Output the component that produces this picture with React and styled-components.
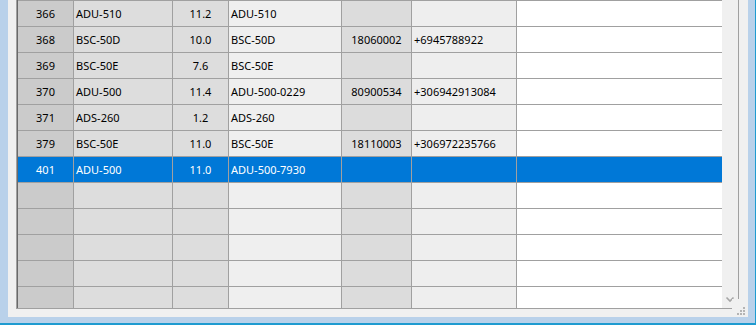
import React from "react";
import styled, { createGlobalStyle } from "styled-components";

const GlobalStyle = createGlobalStyle`
  html, body {
    margin: 0;
    padding: 0;
    overflow: hidden;
    background: #b9d1ea;
  }
  body {
    font-family: "Noto Sans", "Open Sans", sans-serif;
    font-size: 11px;
  }
`;

const Window = styled.div`
  box-sizing: border-box;
  width: 756px;
  height: 325px;
  display: flex;
  background: #b9d1ea;
  border-right: 1px solid #1e9bd0;
  border-bottom: 2px solid #1e9bd0;
  padding: 0 7px 6px 8px;
`;

const Client = styled.div`
  position: relative;
  flex: 1;
  display: flex;
  background: #f0f0f0;
  padding: 0 9px 8px 8px;
`;

const GridFrame = styled.div`
  flex: 1;
  display: flex;
  border-left: 1px solid #a0a0a0;
  border-right: 1px solid #a0a0a0;
  border-bottom: 1px solid #a0a0a0;
`;

const GridBody = styled.div`
  flex: 1;
  display: flex;
  border-left: 1px solid #696969;
  min-height: 0;
`;

const DataArea = styled.div`
  width: 704px;
  overflow: hidden;
  border-top: 1px solid #a0a0a0;
  display: flex;
  flex-direction: column;
`;

const Row = styled.div`
  flex: none;
  display: grid;
  grid-template-columns: 56px 99px 56px 113px 70px 105px 205px;
  height: 26px;
  box-sizing: border-box;
  border-bottom: 1px solid #a0a0a0;
`;

const COLS = [
  { bg: "#cbcbcb", align: "center" },
  { bg: "#dddddd", align: "left" },
  { bg: "#dddddd", align: "center" },
  { bg: "#efefef", align: "left" },
  { bg: "#dcdcdc", align: "center" },
  { bg: "#eeeeee", align: "left" },
  { bg: "#ffffff", align: "left", last: true },
];

const Cell = styled.div`
  box-sizing: border-box;
  height: 25px;
  line-height: 25px;
  padding: 0 2px;
  white-space: nowrap;
  overflow: hidden;
  text-align: ${(p) => p.$align};
  background: ${(p) => (p.$selected ? "#0078d7" : p.$bg)};
  color: ${(p) => (p.$selected ? "#ffffff" : "#000000")};
  border-right: ${(p) => (p.$last ? "none" : "1px solid #a0a0a0")};
`;

const ScrollBar = styled.div`
  width: 16px;
  background: #f0f0f0;
  display: flex;
  flex-direction: column;
  justify-content: flex-end;
`;

const ArrowButton = styled.div`
  height: 17px;
  display: flex;
`;

const SizeGrip = styled.div`
  position: absolute;
  right: 0;
  bottom: 0;
  width: 16px;
  height: 18px;
  background: #f0f0f0;
  display: flex;
`;

const rows = [
  ["366", "ADU-510", "11.2", "ADU-510", "", ""],
  ["368", "BSC-50D", "10.0", "BSC-50D", "18060002", "+6945788922"],
  ["369", "BSC-50E", "7.6", "BSC-50E", "", ""],
  ["370", "ADU-500", "11.4", "ADU-500-0229", "80900534", "+306942913084"],
  ["371", "ADS-260", "1.2", "ADS-260", "", ""],
  ["379", "BSC-50E", "11.0", "BSC-50E", "18110003", "+306972235766"],
  ["401", "ADU-500", "11.0", "ADU-500-7930", "", ""],
  ["", "", "", "", "", ""],
  ["", "", "", "", "", ""],
  ["", "", "", "", "", ""],
  ["", "", "", "", "", ""],
  ["", "", "", "", "", ""],
];

const SELECTED = 6;

export default function App() {
  return (
    <>
      <GlobalStyle />
      <Window>
        <Client>
          <GridFrame>
            <GridBody>
              <DataArea>
                {rows.map((r, i) => (
                  <Row key={i}>
                    {COLS.map((c, j) => (
                      <Cell
                        key={j}
                        $bg={c.bg}
                        $align={c.align}
                        $last={c.last}
                        $selected={i === SELECTED}
                      >
                        {r[j] || ""}
                      </Cell>
                    ))}
                  </Row>
                ))}
              </DataArea>
              <ScrollBar>
                <ArrowButton>
                  <svg width="16" height="17" viewBox="0 0 16 17">
                    <path
                      d="M4.5 6.5 L8 10 L11.5 6.5"
                      fill="none"
                      stroke="#a6a6a6"
                      strokeWidth="1.6"
                    />
                  </svg>
                </ArrowButton>
              </ScrollBar>
            </GridBody>
          </GridFrame>
          <SizeGrip>
            <svg width="16" height="18" viewBox="0 0 16 18">
              <g fill="#b4b4b4">
                <rect x="11" y="8" width="2" height="2" />
                <rect x="8" y="11" width="2" height="2" />
                <rect x="11" y="11" width="2" height="2" />
                <rect x="5" y="14" width="2" height="2" />
                <rect x="8" y="14" width="2" height="2" />
                <rect x="11" y="14" width="2" height="2" />
              </g>
            </svg>
          </SizeGrip>
        </Client>
      </Window>
    </>
  );
}
